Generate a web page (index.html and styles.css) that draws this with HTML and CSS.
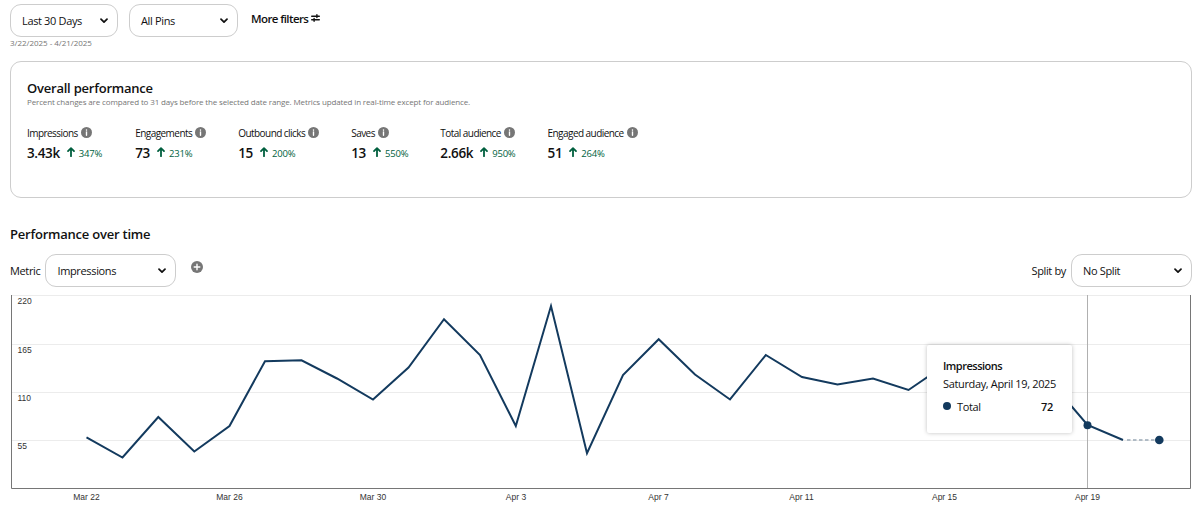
FILE: index.html
```
<!DOCTYPE html>
<html lang="en">
<head>
    <meta charset="UTF-8">
    <meta name="viewport" content="width=device-width, initial-scale=1.0">
    <title>Analytics overview</title>
    <link rel="stylesheet" href="styles.css">
</head>
<body>
    <!-- shared icons -->
    <svg class="sprite" width="0" height="0">
        <symbol id="chevron" viewBox="0 0 8 6"><path d="M1 1.2 4 4.2 7 1.2" fill="none" stroke="#111" stroke-width="1.7" stroke-linecap="round" stroke-linejoin="round"/></symbol>
        <symbol id="info" viewBox="0 0 24 24"><circle cx="12" cy="12" r="12" fill="#767676"/><circle cx="12" cy="6.8" r="1.7" fill="#fff"/><path d="M12 10.5v7.5" stroke="#fff" stroke-width="3" stroke-linecap="round"/></symbol>
        <symbol id="up" viewBox="0 0 8 10"><path d="M4 9.2V1.4M1 4.1 4 1.1 7 4.1" fill="none" stroke="#005f3e" stroke-width="1.8" stroke-linecap="round" stroke-linejoin="round"/></symbol>
    </svg>

    <div class="filters">
        <div class="filter-col">
            <div class="select select-date"><span>Last 30 Days</span><svg class="chevron"><use href="#chevron"/></svg></div>
            <p class="date-range">3/22/2025 - 4/21/2025</p>
        </div>
        <div class="select select-pins"><span>All Pins</span><svg class="chevron"><use href="#chevron"/></svg></div>
        <div class="more-filters">
            <span>More filters</span>
            <svg width="9" height="8" viewBox="0 0 9 8" fill="none" stroke="#111" stroke-width="1.4" stroke-linecap="round">
                <path d="M.7 2.2h7.6M.7 5.8h7.6M5.9.8v2.8M3.1 4.4v2.8"/>
            </svg>
        </div>
    </div>

    <section class="card">
        <h2>Overall performance</h2>
        <p class="note">Percent changes are compared to 31 days before the selected date range. Metrics updated in real-time except for audience.</p>
        <div class="metrics">
            <div class="metric">
                <div class="metric-name"><span>Impressions</span><svg class="info"><use href="#info"/></svg></div>
                <div class="metric-value"><strong>3.43k</strong><svg class="up"><use href="#up"/></svg><span>347%</span></div>
            </div>
            <div class="metric">
                <div class="metric-name"><span>Engagements</span><svg class="info"><use href="#info"/></svg></div>
                <div class="metric-value"><strong>73</strong><svg class="up"><use href="#up"/></svg><span>231%</span></div>
            </div>
            <div class="metric">
                <div class="metric-name"><span>Outbound clicks</span><svg class="info"><use href="#info"/></svg></div>
                <div class="metric-value"><strong>15</strong><svg class="up"><use href="#up"/></svg><span>200%</span></div>
            </div>
            <div class="metric">
                <div class="metric-name"><span>Saves</span><svg class="info"><use href="#info"/></svg></div>
                <div class="metric-value"><strong>13</strong><svg class="up"><use href="#up"/></svg><span>550%</span></div>
            </div>
            <div class="metric">
                <div class="metric-name"><span>Total audience</span><svg class="info"><use href="#info"/></svg></div>
                <div class="metric-value"><strong>2.66k</strong><svg class="up"><use href="#up"/></svg><span>950%</span></div>
            </div>
            <div class="metric">
                <div class="metric-name"><span>Engaged audience</span><svg class="info"><use href="#info"/></svg></div>
                <div class="metric-value"><strong>51</strong><svg class="up"><use href="#up"/></svg><span>264%</span></div>
            </div>
        </div>
    </section>

    <h2 class="chart-title">Performance over time</h2>
    <div class="controls">
        <span class="label">Metric</span>
        <div class="select select-metric"><span>Impressions</span><svg class="chevron"><use href="#chevron"/></svg></div>
        <svg class="add" viewBox="0 0 12 12"><circle cx="6" cy="6" r="6" fill="#767676"/><path d="M6 3.2v5.6M3.2 6h5.6" stroke="#fff" stroke-width="1.4" stroke-linecap="round"/></svg>
        <span class="label split-label">Split by</span>
        <div class="select select-split"><span>No Split</span><svg class="chevron"><use href="#chevron"/></svg></div>
    </div>

    <div class="chart">
        <svg width="1182" height="217" viewBox="0 0 1182 217">
            <g class="grid">
                <path d="M1 1.5h1180M1 50.5h1180M1 98.5h1180M1 146.5h1180"/>
            </g>
            <path class="cursor" d="M1077.5 1v193"/>
            <path class="axis" d="M1.5 1v193.5h1179V1"/>
            <g class="y-labels">
                <text x="7.5" y="10">220</text>
                <text x="7.5" y="59">165</text>
                <text x="7.5" y="107">110</text>
                <text x="7.5" y="155">55</text>
            </g>
            <g class="x-labels">
                <text x="76.5" y="206">Mar 22</text>
                <text x="219.5" y="206">Mar 26</text>
                <text x="363" y="206">Mar 30</text>
                <text x="506" y="206">Apr 3</text>
                <text x="648.5" y="206">Apr 7</text>
                <text x="791.5" y="206">Apr 11</text>
                <text x="934.5" y="206">Apr 15</text>
                <text x="1077.5" y="206">Apr 19</text>
            </g>
            <polyline class="line" points="76.5,143.3 112.5,163.5 148.3,123 184.3,157.5 219.5,132 255,67.2 291.5,66.3 327,84.5 363,105.6 398.5,73.5 434,25.2 470,61 505.8,132 541,12 577,159.2 613,81 648.7,45.2 685,80.5 720,105.5 755.8,61 792,83 827.5,90.5 863,84.5 898.5,96 934.5,71.5 970,66 1006,84 1041.7,89 1077.5,131 1113,146"/>
            <path class="line dashed" d="M1117 146h32"/>
            <circle class="dot" cx="1077.5" cy="131.2" r="4"/>
            <circle class="dot" cx="1149.3" cy="146" r="4.3"/>
        </svg>
        <div class="tooltip">
            <h3>Impressions</h3>
            <p>Saturday, April 19, 2025</p>
            <div class="tooltip-row"><i class="bullet"></i><span>Total</span><b>72</b></div>
        </div>
    </div>
</body>
</html>
```
FILE: styles.css
```
* {
    margin: 0;
    padding: 0;
    box-sizing: border-box;
}

body {
    width: 1200px;
    padding: 4px 8px 0 10px;
    background-color: #fff;
    color: #111;
    font-family: 'Segoe UI', 'Open Sans', 'Noto Sans', sans-serif;
    font-size: 11px;
    letter-spacing: -0.35px;
    overflow: hidden;
}

svg {
    display: block;
    flex: none;
}

.sprite {
    position: absolute;
}

.filters {
    display: flex;
    align-items: flex-start;
    height: 57px;
}

.filter-col {
    margin-right: 11px;
}

.select {
    display: flex;
    align-items: center;
    justify-content: space-between;
    height: 33px;
    padding: 0 9px 0 11px;
    border: 1px solid #cdcdcd;
    border-radius: 11px;
    background-color: #fff;
}

.select-date {
    width: 108px;
}

.select-pins {
    width: 109px;
}

.select-metric {
    width: 131px;
    margin-left: 5px;
}

.select-split {
    width: 121px;
    margin-left: 5px;
}

.chevron {
    width: 8px;
    height: 6px;
}

.date-range {
    height: 12px;
    line-height: 12px;
    font-size: 8px;
    letter-spacing: -0.03px;
    color: #767676;
}

.more-filters {
    display: flex;
    align-items: center;
    gap: 3px;
    height: 16px;
    margin: 6px 0 0 13px;
    font-size: 11.5px;
    font-weight: 600;
    letter-spacing: -0.6px;
}

.card {
    height: 137px;
    padding: 18px 16px;
    border: 1px solid #cdcdcd;
    border-radius: 11px;
}

h2 {
    height: 16px;
    line-height: 16px;
    font-size: 13px;
    font-weight: 600;
    letter-spacing: -0.22px;
}

.note {
    height: 12px;
    line-height: 12px;
    font-size: 8px;
    letter-spacing: -0.14px;
    color: #767676;
}

.metrics {
    display: flex;
    gap: 32px;
    margin-top: 18px;
}

.metric-name {
    display: flex;
    align-items: center;
    gap: 3px;
    height: 14px;
    font-size: 10px;
    letter-spacing: -0.55px;
}

.info {
    width: 11px;
    height: 11px;
    margin-bottom: 1px;
}

.metric-value {
    display: flex;
    align-items: center;
    height: 16px;
    margin-top: 5px;
    color: #005f3e;
    font-size: 9.5px;
    font-weight: 500;
    letter-spacing: -0.2px;
}

.metric-value strong {
    font-size: 13.5px;
    font-weight: 600;
    letter-spacing: -0.35px;
    color: #111;
}

.up {
    width: 8px;
    height: 10px;
    margin: 0 4px 3px 7px;
}

.metric:first-child {
    margin-right: 1px;
}

.chart-title {
    margin-top: 28px;
}

.controls {
    display: flex;
    align-items: center;
    height: 33px;
    margin-top: 12px;
}

.add {
    width: 12px;
    height: 12px;
    margin: 0 0 7px 15px;
}

.split-label {
    margin-left: auto;
}

.chart {
    position: relative;
    margin-top: 7px;
}

.grid path {
    stroke: #ececec;
}

.cursor {
    stroke: #b0b0b0;
}

.axis {
    fill: none;
    stroke: #767676;
}

.chart text {
    font-family: Arial, 'Liberation Sans', sans-serif;
    font-size: 8.5px;
    letter-spacing: 0;
    fill: #333;
}

.x-labels {
    text-anchor: middle;
}

.line {
    fill: none;
    stroke: #133a5e;
    stroke-width: 2;
}

.dashed {
    stroke: #9aa9b7;
    stroke-dasharray: 3.5 2.5;
    stroke-width: 1.5;
}

.dot {
    fill: #133a5e;
}

.tooltip {
    position: absolute;
    left: 917px;
    top: 51px;
    width: 145px;
    height: 88px;
    padding: 12px 16px;
    border-radius: 2px;
    background-color: #fff;
    box-shadow: 0 0 4px rgba(0, 0, 0, 0.25);
    font-size: 11px;
}

.tooltip h3 {
    line-height: 18px;
    font-size: 11px;
    font-weight: 600;
    letter-spacing: -0.5px;
}

.tooltip p {
    line-height: 18px;
    white-space: nowrap;
}

.tooltip-row {
    display: flex;
    align-items: center;
    height: 18px;
    margin-top: 4px;
    padding-right: 3px;
}

.bullet {
    width: 8px;
    height: 8px;
    margin-right: 6px;
    border-radius: 50%;
    background-color: #133a5e;
}

.tooltip-row b {
    margin-left: auto;
    font-weight: 600;
}
```
